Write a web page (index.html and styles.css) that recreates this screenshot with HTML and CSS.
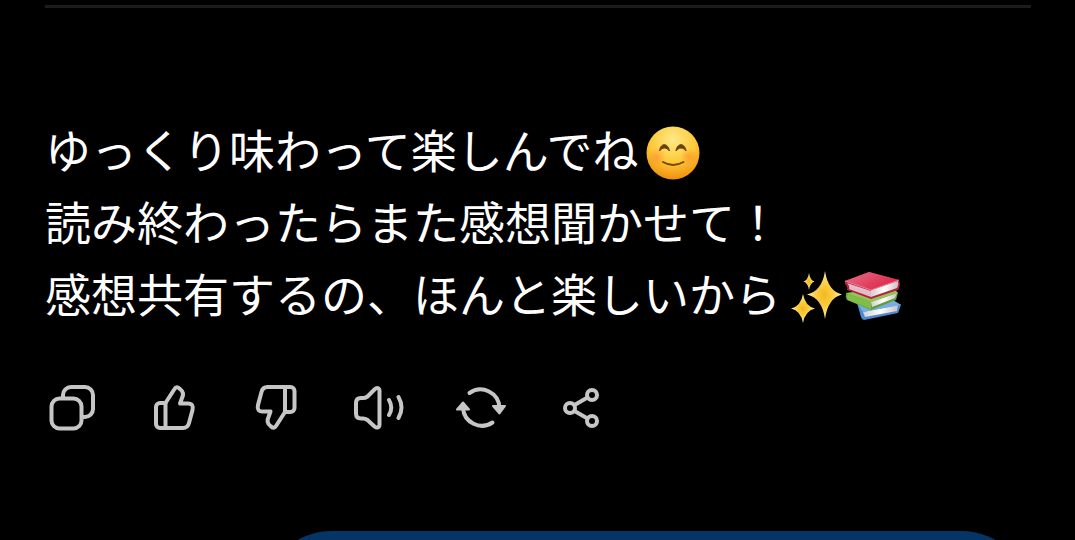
FILE: index.html
```html
<!DOCTYPE html>
<html lang="ja">
<head>
<meta charset="UTF-8">
<meta name="viewport" content="width=device-width, initial-scale=1.0">
<title>チャット</title>
<link rel="stylesheet" href="styles.css">
</head>
<body>

<main class="chat">
    <hr class="divider">

    <article class="reply">
        <p>ゆっくり味わって楽しんでね<svg class="emoji" viewBox="0 0 54 54" role="img" aria-label="笑顔">
            <defs>
                <radialGradient id="face" cx="50%" cy="25%" r="78%">
                    <stop offset="0" stop-color="#ffe98a"/>
                    <stop offset="0.55" stop-color="#fdc936"/>
                    <stop offset="1" stop-color="#ee8a0c"/>
                </radialGradient>
                <radialGradient id="cheek">
                    <stop offset="0" stop-color="#ff7433" stop-opacity="0.45"/>
                    <stop offset="1" stop-color="#ff7433" stop-opacity="0"/>
                </radialGradient>
            </defs>
            <circle cx="27" cy="27" r="26.500" fill="url(#face)"/>
            <circle cx="11" cy="31" r="9" fill="url(#cheek)"/>
            <circle cx="43" cy="31" r="9" fill="url(#cheek)"/>
            <path d="M13.500 25C14.500 16.500 22 16.500 23.500 25C20.500 21 16.500 21 13.500 25zM30 25C31 16.500 39 16.500 40 25C37 21 33 21 30 25z" fill="#68400f" stroke="#68400f" stroke-width="1" stroke-linejoin="round"/>
            <path d="M17 36Q27 42 37.500 36" fill="none" stroke="#7c450b" stroke-width="2" stroke-linecap="round"/>
        </svg></p>
        <p>読み終わったらまた感想聞かせて！</p>
        <p>感想共有するの、ほんと楽しいから<svg class="emoji" viewBox="0 0 54 54" role="img" aria-label="きらきら">
            <defs>
                <radialGradient id="spark">
                    <stop offset="0" stop-color="#f3b81c"/>
                    <stop offset="0.5" stop-color="#fbcf45"/>
                    <stop offset="1" stop-color="#fff0b0"/>
                </radialGradient>
            </defs>
            <g fill="url(#spark)">
                <path d="M36 1Q39 21 53 24.500Q39 28 36 49Q33 28 18 24.500Q33 21 36 1z"/>
                <path d="M14 24Q16 36 26 38.500Q16 41 14 53Q12 41 2 38.500Q12 36 14 24z"/>
                <path d="M20 3Q21 10 25.500 11.500Q21 13 20 20Q19 13 14.500 11.500Q19 10 20 3z"/>
            </g>
        </svg><svg class="emoji emoji-books" viewBox="0 0 60 54" role="img" aria-label="本">
            <defs>
                <linearGradient id="red" x1="0" y1="0" x2="1" y2="0.6">
                    <stop offset="0" stop-color="#e8708a"/>
                    <stop offset="1" stop-color="#dc2447"/>
                </linearGradient>
                <linearGradient id="paper" x1="0" y1="0" x2="1" y2="0">
                    <stop offset="0" stop-color="#d5ced2"/>
                    <stop offset="0.5" stop-color="#ffffff"/>
                    <stop offset="1" stop-color="#cbbfc5"/>
                </linearGradient>
            </defs>
            <path d="M14 33L48 29L58 35L55 43L21 50Q19 50 18 47z" fill="#4c8ad0"/>
            <path d="M20 42L55 35L54 41L22 47z" fill="url(#paper)"/>
            <path d="M14 33L20 42L58 35L48 29z" fill="#78aee7"/>
            <path d="M3 23L50 18L55 23L53 30L28 40L4 30Q2 27 3 23z" fill="#5f9f35"/>
            <path d="M28 32L54 23L52 28L29 37z" fill="url(#paper)"/>
            <path d="M3 23L28 32L55 23L50 18z" fill="#92c757"/>
            <path d="M5 24L28 32V39L5 30Q3 27 5 24z" fill="#83bd49"/>
            <path d="M2 11L26 2L56 10Q58 15 55 20L28 29L4 20Q5 17 2 14z" fill="#b91f3d"/>
            <path d="M28 20L55 11Q56 15 54 18L28 27z" fill="url(#paper)"/>
            <path d="M4 13L28 21V27L6 19Q7 16 4 13z" fill="#e2bcc6"/>
            <path d="M2 11L26 2L56 10L28 20z" fill="url(#red)"/>
            <path d="M2 11L28 20L56 10" fill="none" stroke="#ef8094" stroke-width="1"/>
        </svg></p>
    </article>

    <div class="actions">
        <button class="action" type="button" aria-label="コピー">
            <svg class="icon" viewBox="0 0 54 54">
                <rect x="6.500" y="17.500" width="30" height="30" rx="8"/>
                <path d="M18 17v-3a8 8 0 0 1 8-8h14a8 8 0 0 1 8 8v14a8 8 0 0 1-8 8h-3"/>
            </svg>
        </button>
        <button class="action" type="button" aria-label="高評価">
            <svg class="icon" viewBox="0 0 54 54">
                <path d="M18.500 22H13a4 4 0 0 0-4 4V43a4 4 0 0 0 4 4H18.500z"/>
                <path d="M18.500 22L27.500 8C29 5.500 31 6 33 8C37 11 36.500 14 35 17L33 22.500H41C45 22.500 46.500 25 45.500 29L42 42C41 46 39 47 36 47H18.500"/>
            </svg>
        </button>
        <button class="action" type="button" aria-label="低評価">
            <svg class="icon" viewBox="0 0 54 54">
                <g transform="rotate(180 27.250 26.500)">
                    <path d="M18.500 22H13a4 4 0 0 0-4 4V43a4 4 0 0 0 4 4H18.500z"/>
                    <path d="M18.500 22L27.500 8C29 5.500 31 6 33 8C37 11 36.500 14 35 17L33 22.500H41C45 22.500 46.500 25 45.500 29L42 42C41 46 39 47 36 47H18.500"/>
                </g>
            </svg>
        </button>
        <button class="action" type="button" aria-label="読み上げ">
            <svg class="icon" viewBox="0 0 54 54">
                <path d="M5 22C5 18.500 7 17 10 17H12C14 17 15 16.500 16.500 15.500L23.500 8.500C26 6 28.500 7 28.500 10V43.500C28.500 46.500 26 47.500 23.500 45.500L16.500 39C15 38 14 37.500 12 37.500H10C7 37.500 5 36 5 32.500z"/>
                <path d="M38 19Q42.500 26.500 38 34M47.500 16Q53.500 26.500 47.500 37"/>
            </svg>
        </button>
        <button class="action" type="button" aria-label="再生成">
            <svg class="icon" viewBox="0 0 54 54">
                <path d="M16.500 12A19 19 0 0 1 46.500 27M10 27A19 19 0 0 0 39.500 41.500"/>
                <path class="solid" d="M40 25H52L46.500 32.500zM4 28.500H16L10 21.500z"/>
            </svg>
        </button>
        <button class="action" type="button" aria-label="共有">
            <svg class="icon" viewBox="0 0 54 54">
                <circle cx="15" cy="27" r="5"/>
                <circle cx="37" cy="14" r="5"/>
                <circle cx="37" cy="40" r="5"/>
                <path d="M19.500 24L32.500 16.500M19.500 30L32.500 37.500"/>
            </svg>
        </button>
    </div>

    <div class="bubble"></div>
</main>

</body>
</html>
```
FILE: styles.css
```css
* {
    box-sizing: border-box;
}

body {
    margin: 0;
    background-color: #000;
    color: #fff;
    font-family: "Noto Sans CJK JP", sans-serif;
}

.chat {
    display: flex;
    flex-direction: column;
    height: 100vh;
    padding: 5px 44px 0 45px;
    overflow: hidden;
}

.divider {
    flex: none;
    width: 100%;
    height: 3px;
    margin: 0;
    border: none;
    background-color: #1c1c1c;
}

.reply {
    flex: none;
    margin-top: 104px;
    font-size: 46px;
    line-height: 72px;
}

.reply p {
    height: 72px;
    margin: 0;
}

.emoji {
    width: 54px;
    height: 54px;
    margin-left: 8px;
    vertical-align: -12px;
}

.emoji-books {
    width: 60px;
    margin-left: 0;
}

.actions {
    display: flex;
    flex: none;
    gap: 48px;
    margin-top: 53px;
}

.action {
    width: 54px;
    height: 54px;
    padding: 0;
    border: none;
    background: none;
    color: #c6c6c6;
    cursor: pointer;
}

.icon {
    display: block;
    width: 100%;
    height: 100%;
    fill: none;
    stroke: currentColor;
    stroke-width: 4;
    stroke-linecap: round;
    stroke-linejoin: round;
}

.solid {
    fill: currentColor;
    stroke-width: 2;
}

/* 自分のメッセージ（下にはみ出す） */
.bubble {
    flex: none;
    align-self: flex-end;
    width: 78%;
    height: 140px;
    margin-top: 96px;
    border-radius: 70px;
    background-color: #053566;
}
```
